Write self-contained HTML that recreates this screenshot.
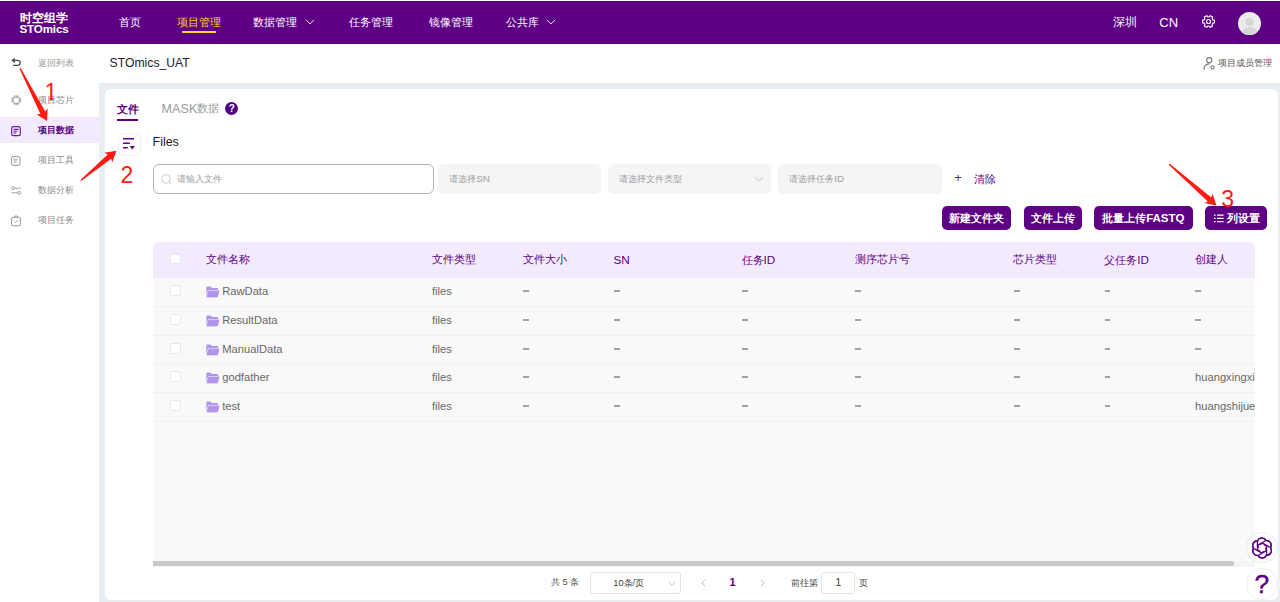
<!DOCTYPE html>
<html lang="zh">
<head>
<meta charset="utf-8">
<title>STOmics</title>
<style>
*{box-sizing:border-box;margin:0;padding:0}
html,body{width:1280px;height:602px;overflow:hidden;background:#fff;font-family:"Liberation Sans",sans-serif;color:#333}
.abs{position:absolute;white-space:nowrap}
svg{position:absolute;overflow:visible}
#top{position:absolute;left:0;top:1px;width:1280px;height:42.5px;background:#5d0083}
#top .nav{position:absolute;top:0;height:43px;line-height:42px;font-size:10.8px;color:#fff;white-space:nowrap}
#top .nav.act{color:#ffd21e}
#logo{position:absolute;left:19.5px;top:11.6px;color:#fff;font-weight:bold;font-size:12px;line-height:11.5px;white-space:nowrap}
#logo span{display:block;font-size:11.6px;letter-spacing:-.15px;margin-top:-1.2px}
#sub{position:absolute;left:0;top:43.5px;width:1280px;height:39.5px;background:#fff}
#side{position:absolute;left:0;top:83px;width:99px;height:519px;background:#fff}
#main{position:absolute;left:99px;top:83px;width:1181px;height:519px;background:#e9eef3}
#card{position:absolute;left:105px;top:89px;width:1172.5px;height:511px;background:#fff;border-radius:6px}
.sitem{position:absolute;left:0;width:99px;height:26px;line-height:26px;font-size:9.2px;color:#8a8a8a;padding-left:37.8px;white-space:nowrap}
.sitem.act{background:#f3ebfd;color:#5d0083;font-weight:bold}
.inp{position:absolute;top:164px;height:30px;border-radius:6px;background:#f5f5f5;font-size:9.2px;color:#9e9ea2;line-height:30.4px;padding-left:11.2px;white-space:nowrap}
.btn{position:absolute;top:206px;height:24px;border-radius:5px;background:#5d0083;color:#fff;font-size:10.5px;font-weight:bold;line-height:25.2px;text-align:center;white-space:nowrap}
#tbl{position:absolute;left:153px;top:242px;width:1102px;height:319px;background:#f9f9f9;border-radius:6px 6px 0 0;overflow:hidden}
#thead{position:absolute;left:0;top:0;width:1102px;height:35.6px;background:#f3ebfd}
.th{position:absolute;top:0.3px;height:35px;line-height:35px;font-size:10.8px;color:#5d0083;white-space:nowrap}
.th.l{font-size:11.7px}
.tr{position:absolute;left:0;width:1102px;height:29px;border-bottom:1px solid #f0f0f5}
.td{position:absolute;top:0;height:27px;line-height:27px;font-size:11.2px;color:#686868;white-space:nowrap}
.cb{position:absolute;left:17.4px;width:10.6px;height:10.6px;border:1px solid #e6e8ef;border-radius:2px;background:#fff}
.d{position:absolute;top:12px;width:5.8px;height:2px;background:#a2a2a4}
.red{color:#ff1a12;font-size:23px;line-height:22px}
</style>
</head>
<body>
<div id="top">
  <div id="logo">时空组学<span>STOmics</span></div>
  <div class="nav" style="left:118.8px">首页</div>
  <div class="nav act" style="left:177.3px">项目管理</div>
  <div class="abs" style="left:182px;top:30.2px;width:34.3px;height:2.2px;background:#ffd21e"></div>
  <div class="nav" style="left:253.4px">数据管理</div>
  <svg style="left:305px;top:16.7px" width="10" height="8" viewBox="0 0 10 8"><path d="M1 1.8 L5 6 L9 1.8" fill="none" stroke="#e8d8f0" stroke-width="1"/></svg>
  <div class="nav" style="left:349px">任务管理</div>
  <div class="nav" style="left:429.2px">镜像管理</div>
  <div class="nav" style="left:505.8px">公共库</div>
  <svg style="left:546px;top:16.7px" width="10" height="8" viewBox="0 0 10 8"><path d="M1 1.8 L5 6 L9 1.8" fill="none" stroke="#e8d8f0" stroke-width="1"/></svg>
  <div class="nav" style="left:1113px;font-size:12.3px">深圳</div>
  <div class="nav" style="left:1159.3px;font-size:13px;line-height:43.5px">CN</div>
  <!-- gear -->
  <svg style="left:1202px;top:14.2px" width="13" height="13" viewBox="-7 -7 14 14">
    <g fill="none" stroke="#fff" stroke-width="1.2" stroke-linejoin="round">
      <path d="M6.38 -1.47 L6.38 1.47 L4.62 1.77 L3.85 3.12 L4.47 4.79 L1.92 6.26 L0.77 4.89 L-0.77 4.89 L-1.92 6.26 L-4.47 4.79 L-3.85 3.12 L-4.62 1.77 L-6.38 1.47 L-6.38 -1.47 L-4.62 -1.77 L-3.85 -3.12 L-4.47 -4.79 L-1.92 -6.26 L-0.77 -4.89 L0.77 -4.89 L1.92 -6.26 L4.47 -4.79 L3.85 -3.12 L4.62 -1.77 Z"/>
      <circle cx="0" cy="0" r="2.2"/>
    </g>
  </svg>
  <!-- avatar -->
  <svg style="left:1237.5px;top:11px" width="23" height="23" viewBox="0 0 23 23">
    <defs><clipPath id="av"><circle cx="11.5" cy="11.5" r="11.5"/></clipPath></defs>
    <circle cx="11.5" cy="11.5" r="11.5" fill="#ececec"/>
    <g clip-path="url(#av)" fill="#d6d6d6"><circle cx="11.5" cy="10" r="4"/><ellipse cx="11.5" cy="21.5" rx="8" ry="6.5"/></g>
  </svg>
</div>

<div id="sub">
  <!-- back icon -->
  <svg style="left:10px;top:12.5px" width="12" height="12" viewBox="0 0 12 12">
    <path d="M3.8 4.3 H7.6 A2.55 2.55 0 0 1 7.6 9.4 H3" fill="none" stroke="#4a4a4a" stroke-width="1.3"/>
    <path d="M1.3 4.3 L4.8 1.7 V6.9 Z" fill="#4a4a4a"/>
  </svg>
  <div class="abs" style="left:38px;top:0;line-height:38px;font-size:9.2px;color:#999">返回列表</div>
  <div class="abs" style="left:109.6px;top:0;line-height:38px;font-size:12.2px;color:#222">STOmics_UAT</div>
  <!-- member icon -->
  <svg style="left:1202.5px;top:13px" width="14" height="14" viewBox="0 0 14 14">
    <g fill="none" stroke="#777" stroke-width="1.1" stroke-linecap="round">
      <circle cx="6.3" cy="3.2" r="2.6"/>
      <path d="M1 12.6 C1 9 3.3 7 6 6.9"/>
      <circle cx="9.5" cy="10.3" r="1.6"/>
    </g>
  </svg>
  <div class="abs" style="left:1218px;top:0;line-height:38.5px;font-size:9.2px;color:#555">项目成员管理</div>
</div>

<div id="main"></div>
<div id="side">
  <div class="sitem" style="top:4px">项目芯片</div>
  <div class="sitem act" style="top:34px">项目数据</div>
  <div class="sitem" style="top:64px">项目工具</div>
  <div class="sitem" style="top:94px">数据分析</div>
  <div class="sitem" style="top:124px">项目任务</div>
  <!-- chip -->
  <svg style="left:11px;top:12px" width="10.5" height="10.5" viewBox="0 0 10.5 10.5">
    <g fill="none" stroke="#8a8a8a" stroke-width=".8">
      <rect x="2.2" y="2.2" width="6.1" height="6.1" rx="1"/>
      <path d="M3.6 .3V2.2M5.25 .3V2.2M6.9 .3V2.2M3.6 8.3V10.2M5.25 8.3V10.2M6.9 8.3V10.2M.3 3.6H2.2M.3 5.25H2.2M.3 6.9H2.2M8.3 3.6H10.2M8.3 5.25H10.2M8.3 6.9H10.2"/>
    </g>
  </svg>
  <!-- doc active -->
  <svg style="left:11px;top:42.7px" width="10" height="10.4" viewBox="0 0 10 10.4">
    <g fill="none" stroke="#6a1b9a" stroke-width="1.2">
      <rect x=".7" y=".7" width="8.6" height="9" rx="1.8"/>
      <path d="M2.6 3.4H7.6M2.6 5.2H6.4M2.6 7H5.2" stroke-width="1.05"/>
    </g>
  </svg>
  <!-- doc gray -->
  <svg style="left:11.3px;top:72.5px" width="9.6" height="10" viewBox="0 0 9.6 10">
    <g fill="none" stroke="#8a8a8a" stroke-width=".9">
      <rect x=".6" y=".6" width="8.4" height="8.8" rx="1.6"/>
      <path d="M2.7 3.2H6.9M2.7 5H6M2.7 6.8H4.6" stroke-width=".8"/>
    </g>
  </svg>
  <!-- sliders -->
  <svg style="left:11px;top:103px" width="10.4" height="9" viewBox="0 0 10.4 9">
    <g fill="none" stroke="#8a8a8a" stroke-width=".8">
      <circle cx="2" cy="2.2" r="1.4"/><path d="M3.4 2.2H10"/>
      <circle cx="8.2" cy="6.8" r="1.4"/><path d="M.4 6.8H6.8"/>
    </g>
  </svg>
  <!-- clipboard -->
  <svg style="left:11.2px;top:132px" width="10" height="11.5" viewBox="0 0 10 11.5">
    <g fill="none" stroke="#8a8a8a" stroke-width=".9" stroke-linejoin="round">
      <rect x=".6" y="2.2" width="8.8" height="8.6" rx="1.6"/>
      <path d="M3 2.2 L5 .6 L7 2.2"/>
      <path d="M3.5 6.4 L4.7 7.5 L6.7 5.5"/>
    </g>
  </svg>
</div>
<div id="card"></div>

<div class="abs" style="left:116.6px;top:101.5px;font-size:10.8px;font-weight:bold;color:#5d0083;line-height:14px">文件</div>
<div class="abs" style="left:116.8px;top:119px;width:21.4px;height:2.2px;background:#5d0083"></div>
<div class="abs" style="left:161.6px;top:101.5px;font-size:10.8px;color:#9a9a9a;line-height:14px"><span style="font-size:12.6px">MASK</span><span style="font-size:10.8px;position:relative;top:-.6px">数据</span></div>
<div class="abs" style="left:225.2px;top:102px;width:13px;height:13px;border-radius:50%;background:#4b0082;color:#fff;font-size:10px;font-weight:bold;line-height:13.4px;text-align:center">?</div>

<!-- sort button -->
<div class="abs" style="left:117.5px;top:132.5px;width:23px;height:23px;border:1px solid #f1f1f3;border-radius:5.5px;background:#fff"></div>
<svg style="left:122px;top:137px" width="14" height="14" viewBox="0 0 14 14">
  <path d="M1 1.7H12M1 6.2H7.8M1 10.75H5.8" stroke="#5d0083" stroke-width="1.4" fill="none"/>
  <path d="M7.6 9H13L10.3 12.5Z" fill="#5d0083"/>
</svg>

<div class="abs" style="left:152.6px;top:134.9px;font-size:12.4px;color:#222;line-height:15px">Files</div>

<div class="abs" style="left:153px;top:164px;width:280.7px;height:30px;border:1.2px solid #b4b4b4;border-radius:6px;background:#fff;font-size:9.2px;color:#9e9ea2;line-height:28.2px;padding-left:22.5px">请输入文件</div>
<svg style="left:161px;top:173.5px" width="11" height="11" viewBox="0 0 11 11"><circle cx="5" cy="5" r="4.1" fill="none" stroke="#c4c4c8" stroke-width=".9"/><path d="M8 8L10 10" stroke="#c4c4c8" stroke-width=".9"/></svg>
<div class="inp" style="left:438px;width:163.3px">请选择<span style="font-size:9.9px">SN</span></div>
<div class="inp" style="left:607.6px;width:163.8px">请选择文件类型</div>
<svg style="left:754px;top:175.5px" width="10" height="7" viewBox="0 0 10 7"><path d="M.8 1 L5 5.2 L9.2 1" fill="none" stroke="#c0c2c8" stroke-width=".9"/></svg>
<div class="inp" style="left:778px;width:164.2px">请选择任务<span style="font-size:9.9px">ID</span></div>
<div class="abs" style="left:954.2px;top:170px;font-size:13px;color:#444;line-height:16px">+</div>
<div class="abs" style="left:974.4px;top:171px;font-size:10.8px;color:#5d0083;line-height:16px">清除</div>

<div class="btn" style="left:942.2px;width:69px">新建文件夹</div>
<div class="btn" style="left:1023.5px;width:58.5px">文件上传</div>
<div class="btn" style="left:1094px;width:98.6px">批量上传<span style="font-size:11.5px">FASTQ</span></div>
<div class="btn" style="left:1205px;width:62px;text-align:left;padding-left:22.4px">列设置</div>
<svg style="left:1214px;top:213.5px" width="10" height="9" viewBox="0 0 10 9">
  <path d="M0 1.2H1.6M0 4.4H1.6M0 7.6H1.6M3 1.2H9.6M3 4.4H9.6M3 7.6H9.6" stroke="#fff" stroke-width="1.3" fill="none"/>
</svg>

<svg width="0" height="0" style="position:absolute">
  <symbol id="fold" viewBox="0 0 14 12">
    <path d="M.3 1.6 Q.3 .6 1.3 .6 H4.6 L6 2 H11.4 Q12.3 2 12.3 2.9 V4 H3 Q2.2 4 2 4.8 L.3 10 Z" fill="#b195ea"/>
    <path d="M2.9 4.7 H13.2 Q13.9 4.7 13.7 5.4 L12 11 Q11.8 11.6 11.1 11.6 H.9 Q.3 11.6 .5 11 L2.3 5.3 Q2.5 4.7 2.9 4.7 Z" fill="#b195ea"/>
  </symbol>
</svg>

<div id="tbl">
  <div id="thead">
    <div class="cb" style="top:11.6px"></div>
    <div class="th" style="left:52.5px">文件名称</div>
    <div class="th" style="left:279.3px">文件类型</div>
    <div class="th" style="left:370px">文件大小</div>
    <div class="th l" style="left:460.4px">SN</div>
    <div class="th" style="left:588.6px">任务<span style="font-size:11.7px">ID</span></div>
    <div class="th" style="left:701.9px">测序芯片号</div>
    <div class="th" style="left:860.4px">芯片类型</div>
    <div class="th" style="left:951.2px">父任务<span style="font-size:11.7px">ID</span></div>
    <div class="th" style="left:1042px">创建人</div>
  </div>

  <div class="tr" style="top:36px">
    <div class="cb" style="top:7.2px"></div>
    <svg style="left:52.8px;top:7.8px" width="13.8" height="11.8"><use href="#fold"/></svg>
    <div class="td" style="left:69.2px">RawData</div>
    <div class="td" style="left:279px">files</div>
    <i class="d" style="left:370.3px"></i><i class="d" style="left:461px"></i><i class="d" style="left:589px"></i><i class="d" style="left:702.3px"></i><i class="d" style="left:861px"></i><i class="d" style="left:951.6px"></i><i class="d" style="left:1042.3px"></i>
  </div>
  <div class="tr" style="top:65px">
    <div class="cb" style="top:7.2px"></div>
    <svg style="left:52.8px;top:7.8px" width="13.8" height="11.8"><use href="#fold"/></svg>
    <div class="td" style="left:69.2px">ResultData</div>
    <div class="td" style="left:279px">files</div>
    <i class="d" style="left:370.3px"></i><i class="d" style="left:461px"></i><i class="d" style="left:589px"></i><i class="d" style="left:702.3px"></i><i class="d" style="left:861px"></i><i class="d" style="left:951.6px"></i><i class="d" style="left:1042.3px"></i>
  </div>
  <div class="tr" style="top:94px;height:28px">
    <div class="cb" style="top:7.2px"></div>
    <svg style="left:52.8px;top:7.8px" width="13.8" height="11.8"><use href="#fold"/></svg>
    <div class="td" style="left:69.2px">ManualData</div>
    <div class="td" style="left:279px">files</div>
    <i class="d" style="left:370.3px"></i><i class="d" style="left:461px"></i><i class="d" style="left:589px"></i><i class="d" style="left:702.3px"></i><i class="d" style="left:861px"></i><i class="d" style="left:951.6px"></i><i class="d" style="left:1042.3px"></i>
  </div>
  <div class="tr" style="top:122px">
    <div class="cb" style="top:7.2px"></div>
    <svg style="left:52.8px;top:7.8px" width="13.8" height="11.8"><use href="#fold"/></svg>
    <div class="td" style="left:69.2px">godfather</div>
    <div class="td" style="left:279px">files</div>
    <i class="d" style="left:370.3px"></i><i class="d" style="left:461px"></i><i class="d" style="left:589px"></i><i class="d" style="left:702.3px"></i><i class="d" style="left:861px"></i><i class="d" style="left:951.6px"></i>
    <div class="td" style="left:1042px">huangxingxing</div>
  </div>
  <div class="tr" style="top:151px">
    <div class="cb" style="top:7.2px"></div>
    <svg style="left:52.8px;top:7.8px" width="13.8" height="11.8"><use href="#fold"/></svg>
    <div class="td" style="left:69.2px">test</div>
    <div class="td" style="left:279px">files</div>
    <i class="d" style="left:370.3px"></i><i class="d" style="left:461px"></i><i class="d" style="left:589px"></i><i class="d" style="left:702.3px"></i><i class="d" style="left:861px"></i><i class="d" style="left:951.6px"></i>
    <div class="td" style="left:1042px">huangshijue1</div>
  </div>
</div>
<!-- scrollbar -->
<div class="abs" style="left:153px;top:561px;width:1102px;height:5.6px;background:#f4f4f4"></div>
<div class="abs" style="left:153px;top:561.2px;width:1080.5px;height:5.3px;background:#c8c8c8;border-radius:0 3px 3px 0"></div>

<!-- pagination -->
<div class="abs" style="left:551px;top:575px;font-size:9.4px;color:#555;line-height:14px">共 5 条</div>
<div class="abs" style="left:590.4px;top:572.3px;width:91px;height:21.5px;border:1px solid #e2e4ea;border-radius:3px;background:#fff"></div>
<div class="abs" style="left:613.2px;top:575.5px;font-size:9.4px;color:#444;line-height:14px">10条/页</div>
<svg style="left:668px;top:580.5px" width="8" height="6" viewBox="0 0 8 6"><path d="M.7 1 L4 4.3 L7.3 1" fill="none" stroke="#b8bac0" stroke-width=".9"/></svg>
<svg style="left:700.6px;top:579px" width="5" height="8" viewBox="0 0 5 8"><path d="M4.2 .7 L.9 4 L4.2 7.3" fill="none" stroke="#b4b6bc" stroke-width=".9"/></svg>
<div class="abs" style="left:729.4px;top:575px;font-size:11px;font-weight:bold;color:#5d0083;line-height:14px">1</div>
<svg style="left:759.6px;top:579px" width="5" height="8" viewBox="0 0 5 8"><path d="M.8 .7 L4.1 4 L.8 7.3" fill="none" stroke="#b4b6bc" stroke-width=".9"/></svg>
<div class="abs" style="left:790.5px;top:576px;font-size:9.2px;color:#444;line-height:14px">前往第</div>
<div class="abs" style="left:821.3px;top:572.3px;width:34px;height:21.5px;border:1px solid #e2e4ea;border-radius:3px;background:#fff;font-size:11px;color:#444;line-height:19.5px;text-align:center">1</div>
<div class="abs" style="left:858.8px;top:576px;font-size:9.2px;color:#444;line-height:14px">页</div>

<!-- floating buttons -->
<div class="abs" style="left:1246.2px;top:531.6px;width:31.6px;height:31.6px;border-radius:50%;background:#fff;border:1px solid #f1e3f6"></div>
<svg style="left:1251px;top:536.5px" width="22" height="22" viewBox="-11 -11 22 22">
  <g fill="none" stroke="#5d0083" stroke-width="1.25">
    <g id="kn"><path d="M-4.6 -6.2 A4.7 4.7 0 0 1 4.2 -7.6 L4.2 -7.6 A4.7 4.7 0 0 1 8.6 -1"/><path d="M-4.6 -6.2 V1.8 L-1.6 3.6"/></g>
    <use href="#kn" transform="rotate(60)"/><use href="#kn" transform="rotate(120)"/><use href="#kn" transform="rotate(180)"/><use href="#kn" transform="rotate(240)"/><use href="#kn" transform="rotate(300)"/>
  </g>
</svg>
<div class="abs" style="left:1246.2px;top:568.2px;width:31.6px;height:31.6px;border-radius:50%;background:#fff;border:1px solid #f3e8f7;color:#5d0083;font-size:26.5px;-webkit-text-stroke:.4px #5d0083;line-height:30px;text-align:center">?</div>

<!-- red annotations -->
<svg style="left:0;top:0" width="1280" height="602" viewBox="0 0 1280 602">
  <g fill="#ff1a12">
    <path d="M19.5 68.7 L40.4 114.0 L36.5 114.3 L47.0 121.0 L47.7 108.5 L45.2 111.6 L20.7 68.1 Z"/>
    <path d="M81.2 180.9 L111.2 158.7 L112.2 162.5 L116.5 150.7 L104.2 152.8 L107.7 154.5 L80.4 179.9 Z"/>
    <path d="M1168.7 164.7 L1207.8 201.5 L1204.2 203.1 L1216.5 205.5 L1212.5 193.7 L1211.3 197.4 L1169.7 163.7 Z"/>
  </g>
</svg>
<div class="abs red" style="left:44.5px;top:80.5px;clip-path:polygon(0 0,100% 0,100% 17.2px,8.7px 17.2px,8.7px 100%,5.1px 100%,5.1px 17.2px,0 17.2px)">1</div>
<div class="abs red" style="left:120.5px;top:164px">2</div>
<div class="abs red" style="left:1221.3px;top:187.8px">3</div>
</body>
</html>
